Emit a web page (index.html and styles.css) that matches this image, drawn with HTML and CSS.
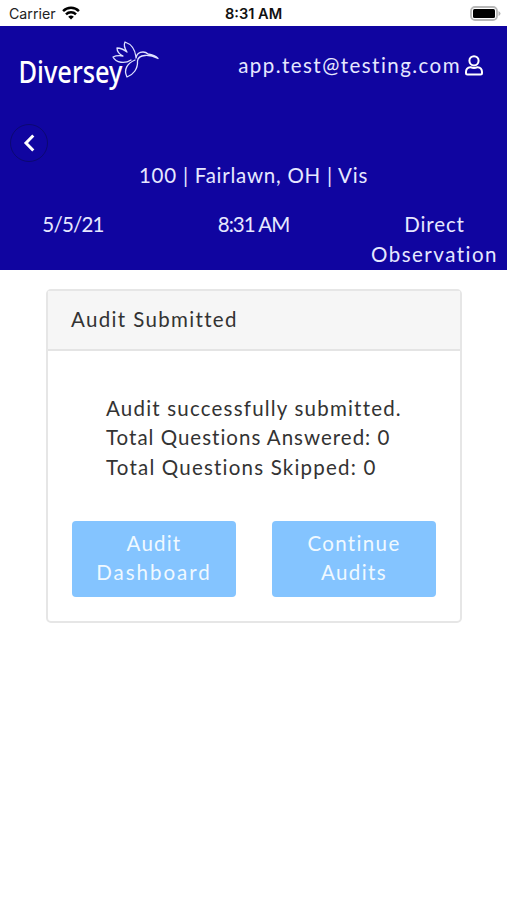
FILE: index.html
```html
<!DOCTYPE html>
<html lang="en">
<head>
<meta charset="utf-8">
<meta name="viewport" content="width=device-width, initial-scale=1">
<title>Audit Submitted</title>
<link rel="stylesheet" href="styles.css">
</head>
<body>
<div class="status">
  <div class="status-left">
    <span>Carrier</span>
    <svg width="18" height="14" viewBox="0 0 18 14" fill="none" stroke="#000" stroke-width="2.5"><path d="M1.1 5.1a11.2 11.2 0 0 1 15.8 0M4 8.3a7.1 7.1 0 0 1 10 0"/><path d="M9 13.6 6.2 10.8a4 4 0 0 1 5.6 0Z" fill="#000" stroke="none"/></svg>
  </div>
  <div class="status-time">8:31 AM</div>
  <svg class="battery" width="31" height="15" viewBox="0 0 31 15"><rect x="1" y="1" width="26" height="13" rx="4" fill="#fff" stroke="#b8b8b8" stroke-width="1.8"/><rect x="3" y="3" width="22" height="9" rx="1.5"/><path d="M28.5 5q2 1 2 2.500t-2 2.500z" fill="#b5b5b5"/></svg>
</div>
<header class="header">
  <div class="topline">
    <svg class="logo" width="142" height="54" viewBox="0 0 142 54" role="img" aria-label="Diversey">
      <text class="logo-word" x="-.5" y="45" textLength="104" lengthAdjust="spacingAndGlyphs">Diversey</text>
      <g fill="none" stroke="#dfe2ff" stroke-width="1.300" stroke-linejoin="round" stroke-linecap="round"><path d="M112 22C106 26 97 25 94 19Q98 17 104 18Q98 15 98 10Q103 10 108 14Q104 8 106 4C112 6 116 11 117 19"/><path d="M117 20Q118 14 124 14Q127 14 129 16Q136 17 139 20.500Q132 17 126 17.500Q119 18 118.500 23C119 31 114 37 108 39C104 31 109 25 116 22"/></g>
    </svg>
    <div class="account">
      <span class="t-email">app.test@testing.com</span>
      <svg width="18" height="21" viewBox="0 0 18 21" fill="none" stroke="#fff" stroke-width="2"><circle cx="9" cy="5.800" r="4.600"/><path d="M5.500 12.200Q9 13.700 12.500 12.200Q17 12.600 17 17V18Q17 19.500 15.500 19.500H2.500Q1 19.500 1 18V17Q1 12.600 5.500 12.200Z"/></svg>
    </div>
  </div>
  <button class="back" aria-label="Back"><svg width="12" height="18" viewBox="0 0 12 18" fill="none" stroke="#fff" stroke-width="3"><path d="M10.300 1.500 3 9l7.300 7.500"/></svg></button>
  <div class="site"><span class="t-site">100 | Fairlawn, OH | Vis</span></div>
  <div class="meta">
    <div><span class="t-date">5/5/21</span></div>
    <div><span class="t-time">8:31 AM</span></div>
    <div><span class="t-direct">Direct</span><br><span class="t-obs">Observation</span></div>
  </div>
</header>
<main class="card">
  <h1 class="card-head"><span class="t-head">Audit Submitted</span></h1>
  <div class="card-body">
    <div class="message">
      <div><span class="t-success">Audit successfully submitted.</span></div>
      <div><span class="t-answered">Total Questions Answered: 0</span></div>
      <div><span class="t-skipped">Total Questions Skipped: 0</span></div>
    </div>
    <div class="actions">
      <button class="btn"><span class="t-audit">Audit</span><br><span class="t-dash">Dashboard</span></button>
      <button class="btn"><span class="t-cont">Continue</span><br><span class="t-audits">Audits</span></button>
    </div>
  </div>
</main>
</body>
</html>
```
FILE: styles.css
```css
* { box-sizing: border-box; }
body { margin: 0; background: #fff; color: #333; font: 20.5px/29.3px Lato, sans-serif; }
button { font: inherit; border: 0; padding: 0; }
svg { display: block; flex: none; }

.status { height: 26px; display: grid; grid-template-columns: 1fr auto 1fr; align-items: center; padding: 1px 6px 0 9px; font: 14.2px/24px Inter, sans-serif; color: #222; }
.status-left { display: flex; align-items: center; gap: 6px; }
.status-left svg { margin-top: -2px; }
.status-time { font-weight: 600; font-size: 14.6px; color: #111; margin-left: -3px; }
.battery { justify-self: end; margin-top: -1px; }

.header { height: 244px; background: #1005a0; color: #e6e8ff; }
.topline { height: 98px; display: flex; justify-content: space-between; padding: 12px 24px 0 19px; }
.logo-word { font: 500 30px "Noto Sans", sans-serif; fill: #fff; }
.account { display: flex; height: 56px; align-items: center; gap: 4px; }
.account svg { margin-top: -2px; }
.back { width: 38px; height: 38px; margin-left: 10px; border: 1.5px solid #0c0872; border-radius: 50%; background: none; display: grid; place-items: center; }
.site { text-align: center; margin-top: -1px; }
.meta { display: grid; grid-template-columns: repeat(3, 1fr); margin-top: 20px; text-align: center; }
.meta > div:first-child { padding-right: 23px; }
.meta > div:last-child { padding-left: 24px; }

.card { width: 416px; height: 334px; margin: 19px auto 0 46px; border: 2px solid #e6e6e6; border-radius: 5px; }
.card-head { margin: 0; height: 60px; padding: 14px 24px 0 23px; background: #f6f6f6; border-bottom: 2px solid #e4e4e4; font: inherit; }
.card-body { padding: 43px 24px 0; }
.message { padding-left: 34px; white-space: nowrap; }
.actions { display: grid; grid-template-columns: 1fr 1fr; gap: 36px; margin-top: 39px; }
.btn { height: 76px; padding-bottom: 2px; border-radius: 4px; background: #84c4ff; color: #f0f9ff; }

/* Per-label tracking */
.t-email { letter-spacing: 1.45px; }
.t-site { letter-spacing: .75px; }
.t-date { letter-spacing: -.8px; }
.t-time { letter-spacing: -.95px; }
.t-direct { letter-spacing: .9px; }
.t-obs { letter-spacing: 1.5px; }
.t-head { letter-spacing: 1.35px; }
.t-success { letter-spacing: 1.2px; }
.t-answered { letter-spacing: 1px; }
.t-skipped { letter-spacing: 1.2px; }
.t-audit { letter-spacing: 1.2px; }
.t-dash { letter-spacing: 2px; }
.t-cont { letter-spacing: 1.35px; }
.t-audits { letter-spacing: 1.4px; }
```
